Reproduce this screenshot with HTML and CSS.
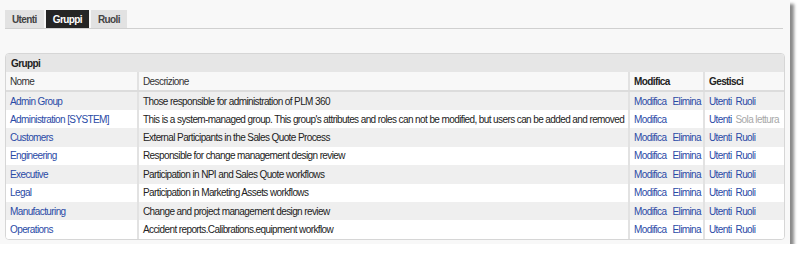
FILE: index.html
```html
<!DOCTYPE html>
<html lang="it">
<head>
    <meta charset="UTF-8">
    <title>Gruppi</title>
    <link rel="stylesheet" href="styles.css">
</head>
<body>
    <div class="window">
        <!-- schede -->
        <div class="tabs">
            <span class="tab">Utenti</span>
            <span class="tab active">Gruppi</span>
            <span class="tab">Ruoli</span>
        </div>

        <div class="panel">
            <div class="panel-title">Gruppi</div>
            <table class="groups">
                <colgroup>
                    <col class="c-name">
                    <col class="c-desc">
                    <col class="c-edit">
                    <col class="c-manage">
                </colgroup>
                <thead>
                    <tr>
                        <th>Nome</th>
                        <th>Descrizione</th>
                        <th>Modifica</th>
                        <th>Gestisci</th>
                    </tr>
                </thead>
                <tbody>
                    <tr>
                        <td><a href="#">Admin Group</a></td>
                        <td>Those responsible for administration of PLM 360</td>
                        <td><a href="#">Modifica</a><a href="#">Elimina</a></td>
                        <td><a href="#">Utenti</a><a href="#">Ruoli</a></td>
                    </tr>
                    <tr>
                        <td><a href="#">Administration [SYSTEM]</a></td>
                        <td>This is a system-managed group. This group's attributes and roles can not be modified, but users can be added and removed</td>
                        <td><a href="#">Modifica</a></td>
                        <td><a href="#">Utenti</a><span class="muted">Sola lettura</span></td>
                    </tr>
                    <tr>
                        <td><a href="#">Customers</a></td>
                        <td>External Participants in the Sales Quote Process</td>
                        <td><a href="#">Modifica</a><a href="#">Elimina</a></td>
                        <td><a href="#">Utenti</a><a href="#">Ruoli</a></td>
                    </tr>
                    <tr>
                        <td><a href="#">Engineering</a></td>
                        <td>Responsible for change management design review</td>
                        <td><a href="#">Modifica</a><a href="#">Elimina</a></td>
                        <td><a href="#">Utenti</a><a href="#">Ruoli</a></td>
                    </tr>
                    <tr>
                        <td><a href="#">Executive</a></td>
                        <td>Participation in NPI and Sales Quote workflows</td>
                        <td><a href="#">Modifica</a><a href="#">Elimina</a></td>
                        <td><a href="#">Utenti</a><a href="#">Ruoli</a></td>
                    </tr>
                    <tr>
                        <td><a href="#">Legal</a></td>
                        <td>Participation in Marketing Assets workflows</td>
                        <td><a href="#">Modifica</a><a href="#">Elimina</a></td>
                        <td><a href="#">Utenti</a><a href="#">Ruoli</a></td>
                    </tr>
                    <tr>
                        <td><a href="#">Manufacturing</a></td>
                        <td>Change and project management design review</td>
                        <td><a href="#">Modifica</a><a href="#">Elimina</a></td>
                        <td><a href="#">Utenti</a><a href="#">Ruoli</a></td>
                    </tr>
                    <tr>
                        <td><a href="#">Operations</a></td>
                        <td>Accident reports.Calibrations.equipment workflow</td>
                        <td><a href="#">Modifica</a><a href="#">Elimina</a></td>
                        <td><a href="#">Utenti</a><a href="#">Ruoli</a></td>
                    </tr>
                </tbody>
            </table>
        </div>
    </div>
</body>
</html>
```

FILE: styles.css
```css
body {
    margin: 0;
    background: #fff;
    font-family: "Liberation Sans", Arial, sans-serif;
    font-size: 10px;
    letter-spacing: -0.6px;
    color: #222;
}

/* finestra con ombra */
.window {
    width: 790px;
    height: 244px;
    box-sizing: border-box;
    padding: 10px 7px 0 5px;
    background: #f8f8f8;
    box-shadow: 4px 4px 3px #8a8a8a;
    overflow: hidden;
}

.tabs {
    display: flex;
    gap: 2px;
    height: 18px;
    border-bottom: 1px solid #d0d0d0;
}

.tab {
    display: flex;
    align-items: center;
    padding: 0 7px;
    background: #e2e2e2;
    font-weight: bold;
    color: #444;
}

.tab.active {
    background: #252525;
    color: #fff;
}

.panel {
    margin-top: 24px;
    width: 778px;
    border: 1px solid #d6d6d6;
    border-radius: 4px;
    overflow: hidden;
    background: #fff;
}

.panel-title {
    height: 18px;
    line-height: 19px;
    padding-left: 5px;
    background: #e6e6e6;
    font-weight: bold;
    color: #222;
}

.groups {
    width: 100%;
    border-collapse: collapse;
    table-layout: fixed;
}

.c-name { width: 132px; }
.c-desc { width: 491px; }
.c-edit { width: 75px; }
.c-manage { width: 80px; }

.groups th,
.groups td {
    height: 18px;
    padding: 0 4px;
    text-align: left;
    white-space: nowrap;
    overflow: hidden;
    border-left: 2px solid #e2e2e2;
}

.groups th:first-child,
.groups td:first-child {
    border-left: none;
}

.groups th {
    height: 18px;
    background: #f8f8f8;
    font-weight: bold;
    border-bottom: 2px solid #dcdcdc;
}

.groups th:first-child,
.groups th:nth-child(2) {
    font-weight: normal;
    color: #333;
}

.groups tbody tr {
    height: 18.4px;
}

.groups tbody tr:nth-child(odd) {
    background: #efefef;
}

.groups tbody tr:nth-child(even) {
    background: #fff;
}

.groups a {
    color: #2a4aa6;
    text-decoration: none;
    margin-right: 6px;
}

.groups td:last-child a {
    margin-right: 4px;
}

.muted {
    color: #a8a8a8;
}
```
